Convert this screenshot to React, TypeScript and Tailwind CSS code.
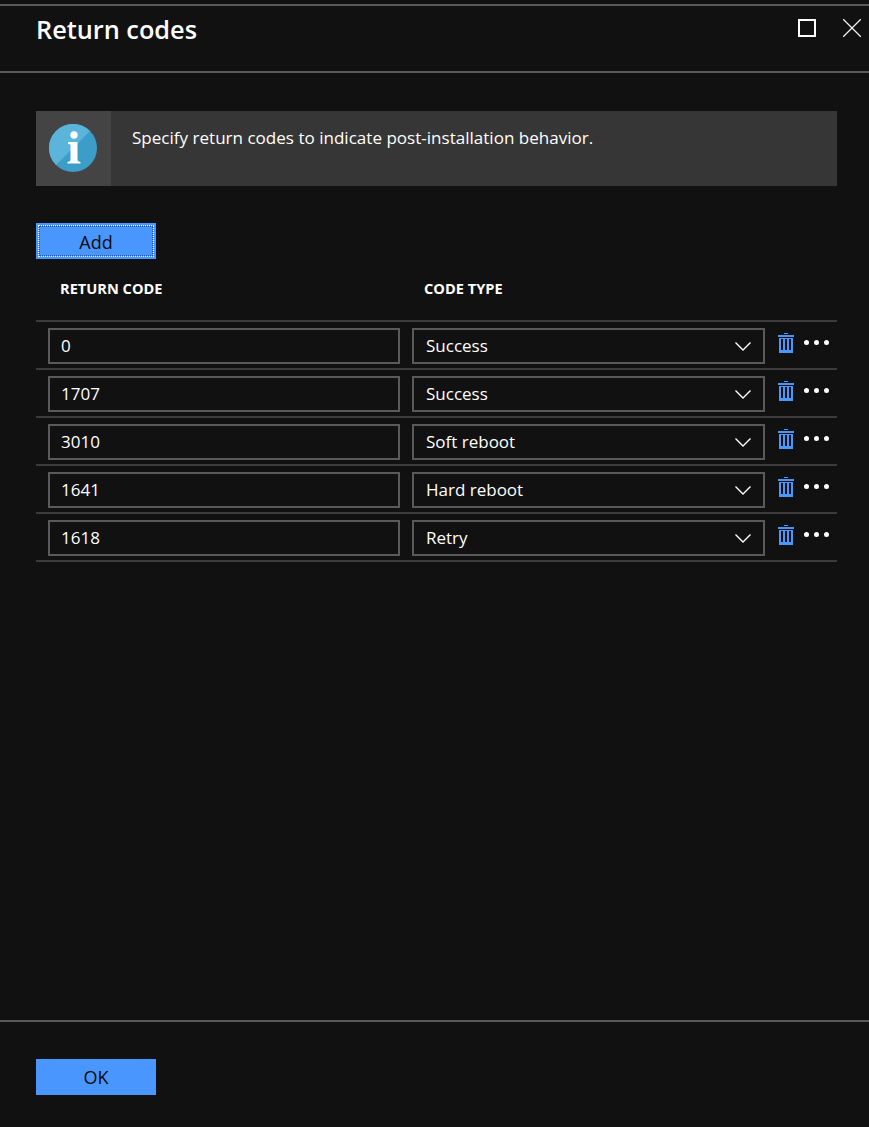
import React from "react";

const rows = [
  { code: "0", type: "Success" },
  { code: "1707", type: "Success" },
  { code: "3010", type: "Soft reboot" },
  { code: "1641", type: "Hard reboot" },
  { code: "1618", type: "Retry" },
];

const InfoIcon = () => (
  <svg width="48" height="48" viewBox="0 0 48 48">
    <circle cx="24" cy="24" r="24" fill="#3c9dc8" />
    <path d="M7 41A24 24 0 0 1 41 7Z" fill="#5bb4d9" />
    <circle cx="25" cy="11" r="3.7" fill="#fff" />
    <path d="M19 18h9.5v18q0 1.5 3 2v1.5H18.5V38q3-.5 3-2V21q0-1-2.500-1.200Z" fill="#fff" />
  </svg>
);

const TrashIcon = () => (
  <svg width="16" height="20" viewBox="0 0 16 20" fill="#4a96ff">
    <rect x="6" y="0" width="4" height="1" />
    <rect x="0" y="2" width="16" height="2" />
    <rect x="1" y="5" width="14" height="1" />
    <rect x="1" y="5" width="2" height="14" />
    <rect x="5" y="5" width="2" height="14" />
    <rect x="9" y="5" width="2" height="14" />
    <rect x="13" y="5" width="2" height="14" />
    <rect x="1" y="17" width="14" height="3" />
  </svg>
);

const Chevron = () => (
  <svg width="16" height="9" viewBox="0 0 16 9" fill="none" stroke="#fff" strokeWidth="1.4">
    <path d="M.5.5L8 8 15.5.5" />
  </svg>
);

const Row = ({ code, type }: { code: string; type: string }) => (
  <div className="flex h-12 items-start border-b-2 border-[#3b3b3b] pl-3 pt-[6px]">
    <div className="flex h-9 w-[352px] items-center border-2 border-[#5a5a5a] pl-[11px] text-white">{code}</div>
    <div className="ml-3 flex h-9 w-[353px] items-center justify-between border-2 border-[#5a5a5a] pl-3 pr-[12px] text-white">
      <span>{type}</span>
      <Chevron />
    </div>
    <div className="ml-[13px] mt-[5px]">
      <TrashIcon />
    </div>
    <div className="ml-[10px] mt-3 flex gap-[5px]">
      <span className="h-[5px] w-[5px] rounded-full bg-white" />
      <span className="h-[5px] w-[5px] rounded-full bg-white" />
      <span className="h-[5px] w-[5px] rounded-full bg-white" />
    </div>
  </div>
);

export default function App() {
  return (
    <div className="flex h-[1127px] w-[869px] flex-col overflow-hidden bg-[#111111] pt-1 text-[17px] font-['Open_Sans','Noto_Sans',sans-serif] text-white">
      <header className="flex h-[69px] items-start justify-between border-y-2 border-[#5a5a5a] pl-9 pr-[8px]">
        <h1 className="mt-[3px] text-[25.3px] font-semibold leading-[40px]">Return codes</h1>
        <div className="mt-[13px] flex items-start gap-[27px]">
          <div className="h-[18px] w-[18px] border-2 border-white" />
          <svg width="18" height="18" viewBox="0 0 18 18" stroke="#eee" strokeWidth="1.3">
            <path d="M0 0l18 18M18 0L0 18" />
          </svg>
        </div>
      </header>

      <main className="flex flex-1 flex-col pl-9 pr-8 pt-[38px]">
        <div className="flex h-[75px] bg-[#363636]">
          <div className="flex w-[75px] items-center justify-center bg-[#444444] pb-px pr-px">
            <InfoIcon />
          </div>
          <p className="ml-[21px] mt-[13px] text-[17.06px] leading-[28px]">Specify return codes to indicate post-installation behavior.</p>
        </div>

        <button className="mt-[37px] h-9 w-[120px] bg-[#4a96ff] p-[3px] text-[18px] text-[#0a0a0a] outline-1 outline-dotted -outline-offset-3 outline-white">
          <span className="flex h-full items-center justify-center border border-dotted border-[#245aa8] pt-0.5">Add</span>
        </button>

        <div className="flex h-[61px] items-center pb-px text-[14.6px] font-bold">
          <span className="ml-6 w-[364px]">RETURN CODE</span>
          <span>CODE TYPE</span>
        </div>

        <div className="border-t-2 border-[#3b3b3b]">
          {rows.map((r) => (
            <Row key={r.code} code={r.code} type={r.type} />
          ))}
        </div>
      </main>

      <footer className="flex h-[107px] items-start border-t-2 border-[#5a5a5a] pl-9 pt-[37px]">
        <button className="h-9 w-[120px] bg-[#4a96ff] text-[18px] text-[#0a0a0a]">OK</button>
      </footer>
    </div>
  );
}
